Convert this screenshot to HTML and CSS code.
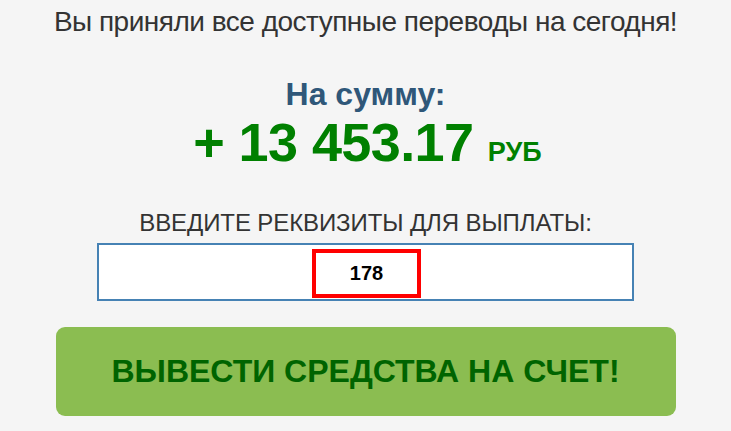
FILE: index.html
```html
<!DOCTYPE html>
<html lang="ru">
<head>
<meta charset="utf-8">
<link rel="stylesheet" href="styles.css">
</head>
<body>
<div class="page">
  <h1 class="title">Вы приняли все доступные переводы на сегодня!</h1>
  <div class="sum-label">На сумму:</div>
  <div class="amount">+ 13 453.17 <span class="cur">РУБ</span></div>
  <div class="req-label">ВВЕДИТЕ РЕКВИЗИТЫ ДЛЯ ВЫПЛАТЫ:</div>
  <div class="input">
    <span class="value">178</span>
  </div>
  <button class="btn">ВЫВЕСТИ СРЕДСТВА НА СЧЕТ!</button>
</div>
</body>
</html>
```
FILE: styles.css
```css
html, body {
  margin: 0;
  padding: 0;
  background: #f5f5f5;
}
body {
  font-family: "Liberation Sans", Arial, sans-serif;
}
.page {
  width: 731px;
  display: flex;
  flex-direction: column;
  align-items: center;
}
.title {
  margin: 7px 0 0;
  font-weight: normal;
  font-size: 28px;
  line-height: 30px;
  color: #333;
  letter-spacing: -0.5px;
}
.sum-label {
  margin-top: 39px;
  font-size: 32px;
  line-height: 36px;
  font-weight: bold;
  color: #2f5779;
}
.amount {
  font-size: 54px;
  line-height: 60px;
  font-weight: bold;
  color: #008000;
  letter-spacing: -0.6px;
  margin-left: 4px;
}
.cur {
  font-size: 27px;
  letter-spacing: 0;
}
.req-label {
  margin-top: 28px;
  font-size: 24px;
  line-height: 26px;
  color: #333;
  letter-spacing: -0.1px;
}
.input {
  margin-top: 7px;
  box-sizing: border-box;
  width: 537px;
  height: 58px;
  background: #fff;
  border: 2px solid #4682b4;
  display: flex;
  justify-content: center;
  align-items: flex-end;
}
.value {
  box-sizing: border-box;
  width: 109px;
  height: 49px;
  border: 4px solid #f00;
  margin-bottom: 1px;
  margin-left: 2px;
  display: flex;
  align-items: center;
  justify-content: center;
  font-size: 20px;
  font-weight: bold;
  color: #000;
}
.btn {
  margin-top: 26px;
  width: 620px;
  height: 89px;
  border: none;
  border-radius: 9px;
  background: #8bbd51;
  color: #006400;
  font-family: "Liberation Sans", Arial, sans-serif;
  font-size: 32px;
  font-weight: bold;
}
```
